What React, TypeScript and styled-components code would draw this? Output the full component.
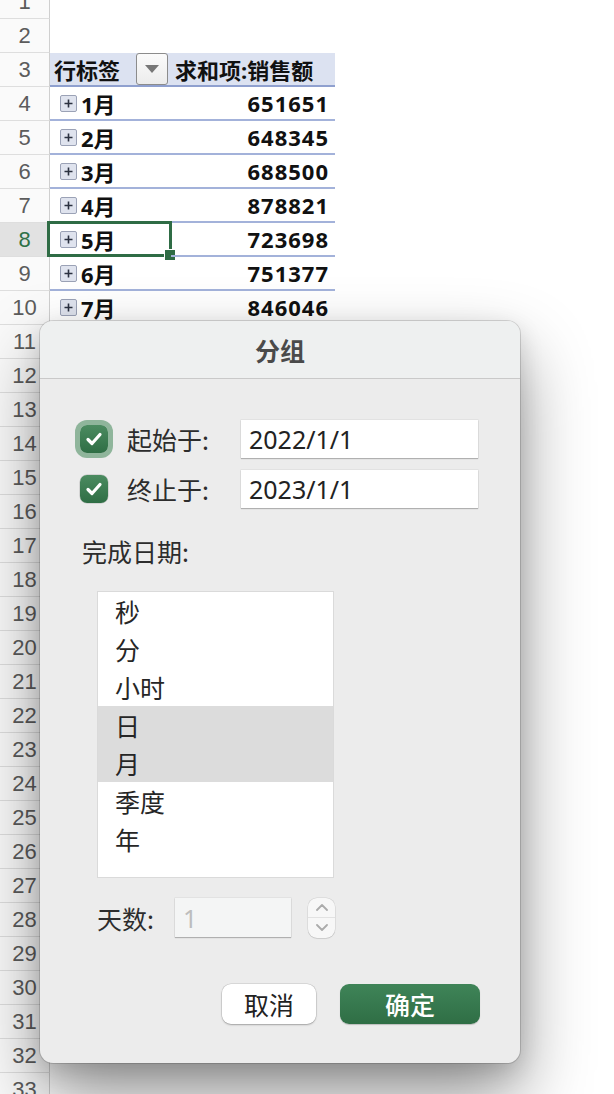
import React from "react";
import styled, { createGlobalStyle, css } from "styled-components";

const GlobalStyle = createGlobalStyle`
  html, body {
    margin: 0;
    padding: 0;
    background: #ffffff;
    overflow: hidden;
  }
  body {
    width: 614px;
    height: 1094px;
    font-family: "Noto Sans", "Noto Sans CJK SC", sans-serif;
  }
`;

const Page = styled.div`
  position: relative;
  width: 614px;
  height: 1094px;
  overflow: hidden;
`;

const Sheet = styled.div`
  display: flex;
  flex-direction: column;
  margin-top: -15px;
`;

const Row = styled.div`
  display: flex;
  height: 34px;
`;

const RowHead = styled.div<{ $active?: boolean }>`
  width: 50px;
  flex: none;
  box-sizing: border-box;
  border-right: 1px solid #cfcfcf;
  border-bottom: 1px solid #dedede;
  background: ${(p) => (p.$active ? "#e2e2e2" : "#fafafa")};
  color: ${(p) => (p.$active ? "#2f7147" : "#5c5c5c")};
  font-family: "Liberation Sans", Arial, sans-serif;
  font-size: 22px;
  display: flex;
  align-items: center;
  justify-content: center;
`;

const Cell = styled.div<{ $w: number; $kind?: "head" | "data"; $right?: boolean }>`
  position: relative;
  width: ${(p) => p.$w}px;
  flex: none;
  box-sizing: border-box;
  display: flex;
  align-items: center;
  font-family: "Noto Sans", "Noto Sans CJK SC", sans-serif;
  font-weight: 700;
  font-size: 22px;
  color: #111;
  justify-content: ${(p) => (p.$right ? "flex-end" : "flex-start")};
  padding: ${(p) => (p.$right ? "0 6px 0 0" : "0 0 0 4px")};
  ${(p) =>
    p.$kind === "head" &&
    css`
      background: #dce2f1;
      border-bottom: 2px solid #8fa0cf;
    `}
  ${(p) =>
    p.$kind === "data" &&
    css`
      border-bottom: 2px solid #a3b2da;
    `}
`;

const Num = styled.span`
  letter-spacing: 1px;
`;

const FilterButton = styled.div`
  margin-left: auto;
  margin-right: 3px;
  width: 32px;
  height: 32px;
  box-sizing: border-box;
  border: 1px solid #8c8c8c;
  border-radius: 3px;
  background: linear-gradient(#fbfbfb, #ececec);
  display: flex;
  align-items: center;
  justify-content: center;
`;

const Month = styled.span`
  display: flex;
  align-items: center;
  gap: 4px;
  padding-left: 6px;
`;

const Selection = styled.div`
  position: absolute;
  left: -3px;
  right: -1px;
  top: -2px;
  bottom: -2px;
  border: 3px solid #2f6c45;
`;

const Handle = styled.div`
  position: absolute;
  right: -7px;
  bottom: -7px;
  width: 10px;
  height: 10px;
  background: #2f6c45;
  border: 1px solid #ffffff;
`;

/* dialog */

const Dialog = styled.div`
  position: absolute;
  left: 40px;
  top: 321px;
  width: 480px;
  height: 742px;
  box-sizing: border-box;
  border-radius: 13px;
  background: #ececec;
  box-shadow: 0 0 0 1px rgba(0, 0, 0, 0.14), 0 34px 70px rgba(0, 0, 0, 0.42),
    0 8px 24px rgba(0, 0, 0, 0.14);
  display: flex;
  flex-direction: column;
  overflow: hidden;
  font-family: "Noto Sans", "Noto Sans CJK SC", sans-serif;
  color: #2a2a2a;
`;

const TitleBar = styled.div`
  height: 57px;
  flex: none;
  background: #eef0f0;
  border-bottom: 1px solid #c9c9c9;
  display: flex;
  align-items: center;
  justify-content: center;
  font-size: 25px;
  font-weight: 600;
  color: #4a4a4a;
  font-family: "Noto Sans CJK SC", sans-serif;
`;

const Body = styled.div`
  display: flex;
  flex-direction: column;
  padding: 41px 40px 0 40px;
`;

const CheckRow = styled.div`
  display: grid;
  grid-template-columns: 28px 95px 237px;
  column-gap: 19px;
  align-items: center;
  height: 38px;
  & + & {
    margin-top: 12px;
  }
`;

const Check = styled.div<{ $focus?: boolean }>`
  width: 28px;
  height: 28px;
  border-radius: 7px;
  background: linear-gradient(#4b8b60, #2f6e45);
  display: flex;
  align-items: center;
  justify-content: center;
  box-shadow: ${(p) => (p.$focus ? "0 0 0 5px #8fb59b" : "0 0 0 0.5px rgba(0,0,0,0.2)")};
`;

const Label = styled.span`
  font-size: 25px;
  color: #2d2d2d;
  font-family: "Noto Sans CJK SC", sans-serif;
  white-space: nowrap;
`;

const Field = styled.div<{ $disabled?: boolean }>`
  height: 38px;
  box-sizing: border-box;
  padding-left: 8px;
  display: flex;
  align-items: center;
  font-size: 25px;
  background: ${(p) => (p.$disabled ? "#f4f5f5" : "#ffffff")};
  color: ${(p) => (p.$disabled ? "#bdbdbd" : "#222222")};
  box-shadow: 0 1px 1px rgba(0, 0, 0, 0.22), 0 0 0 0.5px rgba(0, 0, 0, 0.08);
`;

const SectionLabel = styled(Label)`
  display: block;
  margin-top: 29px;
  margin-left: 2px;
  line-height: 28px;
`;

const ListBox = styled.div`
  margin: 26px 0 0 17px;
  width: 237px;
  height: 287px;
  box-sizing: border-box;
  background: #ffffff;
  border: 1px solid #dadada;
`;

const ListItem = styled.div<{ $selected?: boolean }>`
  height: 38px;
  display: flex;
  align-items: center;
  padding-left: 17px;
  font-size: 25px;
  font-family: "Noto Sans CJK SC", sans-serif;
  color: #262626;
  background: ${(p) => (p.$selected ? "#dcdcdc" : "transparent")};
`;

const DaysRow = styled.div`
  display: grid;
  grid-template-columns: 61px 116px 27px;
  column-gap: 17px;
  align-items: center;
  margin: 19px 0 0 17px;
  height: 41px;
`;

const DaysInput = styled(Field)`
  height: 39px;
`;

const Stepper = styled.div`
  width: 27px;
  height: 40px;
  box-sizing: border-box;
  border-radius: 9px;
  background: #f7f7f7;
  box-shadow: 0 0 0 0.5px rgba(0, 0, 0, 0.12), 0 1px 1px rgba(0, 0, 0, 0.08);
  display: flex;
  flex-direction: column;
  & > div + div {
    border-top: 1px solid #e2e2e2;
  }
`;

const StepHalf = styled.div`
  flex: 1;
  display: flex;
  align-items: center;
  justify-content: center;
`;

const Buttons = styled.div`
  display: flex;
  justify-content: flex-end;
  gap: 24px;
  margin-top: 46px;
`;

const Button = styled.div<{ $primary?: boolean }>`
  height: 40px;
  width: ${(p) => (p.$primary ? 140 : 94)}px;
  border-radius: 9px;
  display: flex;
  align-items: center;
  justify-content: center;
  font-size: 25px;
  font-family: "Noto Sans CJK SC", sans-serif;
  ${(p) =>
    p.$primary
      ? css`
          background: linear-gradient(#3f8458, #2f6e45);
          color: #ffffff;
          font-weight: 500;
          box-shadow: 0 1px 1px rgba(0, 0, 0, 0.2);
        `
      : css`
          background: #ffffff;
          color: #222222;
          box-shadow: 0 0 0 0.5px rgba(0, 0, 0, 0.15), 0 1px 2px rgba(0, 0, 0, 0.25);
        `}
`;

const PlusIcon = () => (
  <svg width="17" height="17" viewBox="0 0 17 17">
    <rect x="0.5" y="0.5" width="16" height="16" rx="1.5" fill="#dfe3ee" stroke="#9ba2b6" />
    <path d="M4.5 8.5h8M8.5 4.5v8" stroke="#2b3140" strokeWidth="1.6" />
  </svg>
);

const TriangleIcon = () => (
  <svg width="16" height="10" viewBox="0 0 16 10">
    <path d="M1 1h14L8 9z" fill="#777777" />
  </svg>
);

const CheckIcon = () => (
  <svg width="22" height="22" viewBox="0 0 22 22">
    <path
      d="M5 11.5l4 4L17 6.5"
      fill="none"
      stroke="#ffffff"
      strokeWidth="3.2"
      strokeLinecap="round"
      strokeLinejoin="round"
    />
  </svg>
);

const Chevron = ({ up }: { up?: boolean }) => (
  <svg width="14" height="8" viewBox="0 0 14 8">
    <path
      d={up ? "M2 7l5-5 5 5" : "M2 1l5 5 5-5"}
      fill="none"
      stroke="#ababab"
      strokeWidth="1.8"
      strokeLinecap="round"
      strokeLinejoin="round"
    />
  </svg>
);

const months = [
  { m: "1月", v: "651651" },
  { m: "2月", v: "648345" },
  { m: "3月", v: "688500" },
  { m: "4月", v: "878821" },
  { m: "5月", v: "723698" },
  { m: "6月", v: "751377" },
  { m: "7月", v: "846046" },
];

const units = ["秒", "分", "小时", "日", "月", "季度", "年"];
const selectedUnits = ["日", "月"];

const App: React.FC = () => {
  const rows = Array.from({ length: 33 }, (_, i) => i + 1);
  return (
    <>
      <GlobalStyle />
      <Page>
        <Sheet>
          {rows.map((n) => {
            const month = n >= 4 && n <= 10 ? months[n - 4] : null;
            return (
              <Row key={n}>
                <RowHead $active={n === 8}>{n}</RowHead>
                {n === 3 && (
                  <>
                    <Cell $w={121} $kind="head">
                      行标签
                      <FilterButton>
                        <TriangleIcon />
                      </FilterButton>
                    </Cell>
                    <Cell $w={164} $kind="head">
                      求和项:销售额
                    </Cell>
                  </>
                )}
                {month && (
                  <>
                    <Cell $w={121} $kind="data">
                      <Month>
                        <PlusIcon />
                        {month.m}
                      </Month>
                      {n === 8 && (
                        <Selection>
                          <Handle />
                        </Selection>
                      )}
                    </Cell>
                    <Cell $w={164} $kind="data" $right>
                      <Num>{month.v}</Num>
                    </Cell>
                  </>
                )}
              </Row>
            );
          })}
        </Sheet>

        <Dialog>
          <TitleBar>分组</TitleBar>
          <Body>
            <CheckRow>
              <Check $focus>
                <CheckIcon />
              </Check>
              <Label>起始于:</Label>
              <Field>2022/1/1</Field>
            </CheckRow>
            <CheckRow>
              <Check>
                <CheckIcon />
              </Check>
              <Label>终止于:</Label>
              <Field>2023/1/1</Field>
            </CheckRow>

            <SectionLabel>完成日期:</SectionLabel>

            <ListBox>
              {units.map((u) => (
                <ListItem key={u} $selected={selectedUnits.includes(u)}>
                  {u}
                </ListItem>
              ))}
            </ListBox>

            <DaysRow>
              <Label>天数:</Label>
              <DaysInput $disabled>1</DaysInput>
              <Stepper>
                <StepHalf>
                  <Chevron up />
                </StepHalf>
                <StepHalf>
                  <Chevron />
                </StepHalf>
              </Stepper>
            </DaysRow>

            <Buttons>
              <Button>取消</Button>
              <Button $primary>确定</Button>
            </Buttons>
          </Body>
        </Dialog>
      </Page>
    </>
  );
};

export default App;
